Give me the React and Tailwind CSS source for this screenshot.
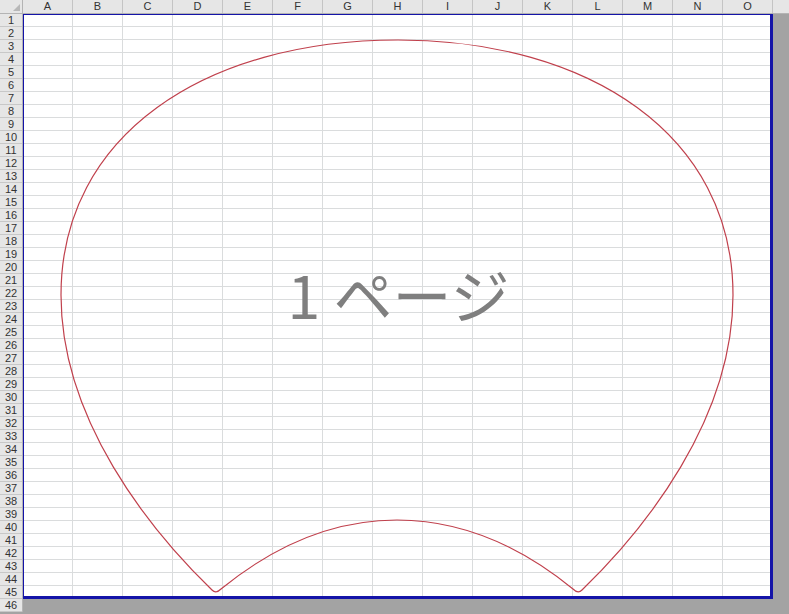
import React from "react";

const COLS = "ABCDEFGHIJKLMNO".split("");
const ROWS = Array.from({ length: 45 }, (_, i) => i + 1);

// uchiwa outline, page coordinates
const FAN =
  "M 212 590 C 150 530 61 420 61 295 C 61 135 205 40 398 40 " +
  "C 589 40 733 135 733 295 C 733 420 644 530 582 590 " +
  "Q 578 594 573 589 C 519 545 459 520 397 520 " +
  "C 335 520 275 545 221 589 Q 216 594 212 590 Z";

export default function App() {
  return (
    <div className="relative w-[789px] h-[614px] overflow-hidden bg-[#a3a3a3] font-['Liberation_Sans',sans-serif] text-[11px] text-[#333]">
      {/* column headers */}
      <div className="flex h-[14px] bg-[#e6e6e6] border-b border-[#b4b4b4]">
        <div className="relative w-[23px] shrink-0 border-r border-[#b4b4b4]">
          <div className="absolute right-[2px] bottom-[2px] w-0 h-0 border-l-[7px] border-l-transparent border-b-[7px] border-b-[#b8b8b8]" />
        </div>
        {COLS.map((c) => (
          <div
            key={c}
            className="w-[50px] shrink-0 border-r border-[#c4c4c4] flex items-center justify-center leading-none"
          >
            {c}
          </div>
        ))}
        <div className="flex-1" />
      </div>

      <div className="flex">
        {/* row headers */}
        <div className="w-[23px] shrink-0 bg-[#e6e6e6] border-r border-[#b4b4b4]">
          {[...ROWS, 46].map((r) => (
            <div
              key={r}
              className="h-[13px] border-b border-[#c8c8c8] flex items-center justify-center leading-none"
            >
              {r}
            </div>
          ))}
        </div>

        {/* sheet */}
        <div className="relative w-[750px] h-[585px] bg-white shrink-0">
          <div className="grid grid-cols-[repeat(15,50px)] grid-rows-[repeat(45,13px)]">
            {ROWS.map((r) =>
              COLS.map((c) => (
                <div key={c + r} className="border-r border-b border-[#dadcdd]" />
              ))
            )}
          </div>
          <div className="absolute inset-0 border-l border-t border-r-[3px] border-b-[3px] border-[#1414a8]" />
        </div>
      </div>

      {/* drawing layer */}
      <svg
        className="absolute left-0 top-0 pointer-events-none"
        width="789"
        height="614"
        viewBox="0 0 789 614"
      >
        <path d={FAN} fill="none" stroke="#c0404c" strokeWidth="1.2" />
      </svg>

      <div className="absolute left-0 w-[797px] top-[264px] text-center text-[59px] leading-none text-[#7f7f7f] font-['Noto_Sans_CJK_JP',sans-serif] pointer-events-none">
        1 ページ
      </div>
    </div>
  );
}
